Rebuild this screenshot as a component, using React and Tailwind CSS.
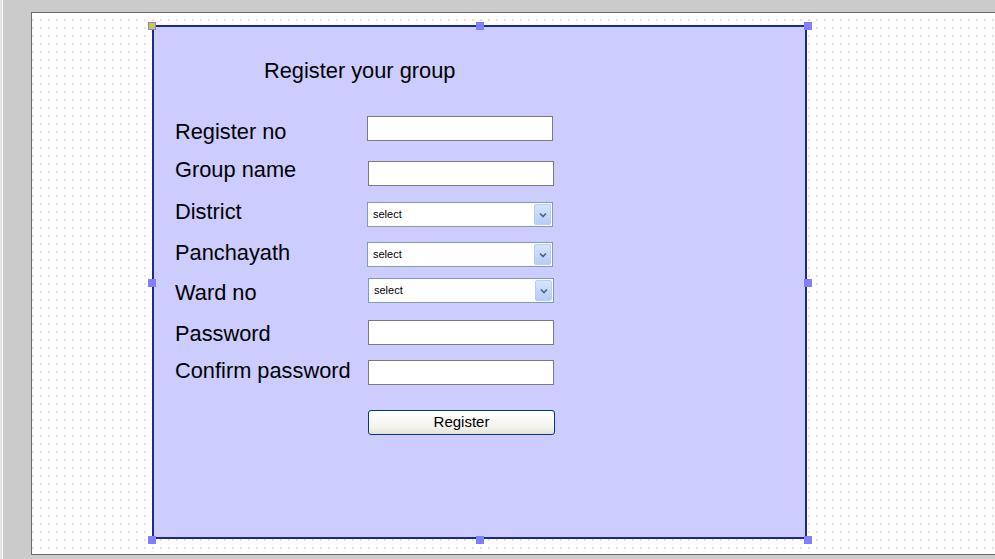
import React from 'react';

const ROWS = [
  { label: 'Register no', kind: 'input', mt: 'mt-0', dy: 'translate-y-[3px]', dx: 'ml-0' },
  { label: 'Group name', kind: 'input', mt: 'mt-[20px]', dy: '-translate-y-[4px]', dx: 'ml-px' },
  { label: 'District', kind: 'select', mt: 'mt-[16px]', dy: '-translate-y-[3px]', dx: 'ml-0' },
  { label: 'Panchayath', kind: 'select', mt: 'mt-[15px]', dy: '-translate-y-[2px]', dx: 'ml-0' },
  { label: 'Ward no', kind: 'select', mt: 'mt-[11px]', dy: 'translate-y-[2px]', dx: 'ml-px' },
  { label: 'Password', kind: 'input', mt: 'mt-[17px]', dy: 'translate-y-[1px]', dx: 'ml-px' },
  { label: 'Confirm password', kind: 'input', mt: 'mt-[15px]', dy: '-translate-y-[2px]', dx: 'ml-px' },
];

function Select() {
  return (
    <div className="flex h-[25px] w-[186px] items-center border border-[#7f9db9] bg-white pl-[5px] pr-px">
      <span className="flex-1 text-[11px] text-black">select</span>
      <div className="flex h-[21px] w-[17px] items-center justify-center rounded-[2px] border border-[#b9cdf5] bg-[linear-gradient(#d6e3fd,#b7cdf8)]">
        <svg width="8" height="6" viewBox="0 0 8 6">
          <path d="M1 1.5 L4 4.5 L7 1.5" fill="none" stroke="#4d6185" strokeWidth="1.6" />
        </svg>
      </div>
    </div>
  );
}

function Handle({ pos, first }) {
  return (
    <div
      className={`absolute h-[8px] w-[8px] ${pos} ${
        first ? 'border border-[#8080ff] bg-[#cccc33]' : 'bg-[#8080ff]'
      }`}
    />
  );
}

export default function App() {
  return (
    <div className="relative flex h-[559px] w-[995px] overflow-hidden bg-[#cbcbcb] font-['Liberation_Sans',Arial,sans-serif]">
      <div className="w-[2px] bg-[#e4e4e4]" />
      <div className="w-px bg-white" />
      <div className="w-[28px]" />

      {/* design canvas */}
      <div className="mt-[12px] h-[543px] flex-1 border-b border-l border-t border-[#6b6b6b] bg-white bg-[radial-gradient(ellipse_0.7px_1.1px,#e2e2e2_90%,transparent_100%)] bg-[length:8px_8px] bg-[position:5px_3px]">
        <div className="relative ml-[120px] mt-[12px] h-[514px] w-[655px] border-2 border-[#1a2a8c] bg-[#ccccff]">
          <Handle pos="-left-[6px] -top-[5px]" first />
          <Handle pos="left-[322px] -top-[5px]" />
          <Handle pos="left-[650px] -top-[5px]" />
          <Handle pos="-left-[6px] top-[252px]" />
          <Handle pos="left-[650px] top-[252px]" />
          <Handle pos="-left-[6px] top-[509px]" />
          <Handle pos="left-[322px] top-[509px]" />
          <Handle pos="left-[650px] top-[509px]" />

          <h1 className="pl-[110px] pt-[32px] text-[21.8px] leading-[24px] text-black">Register your group</h1>

          <div className="mt-[33px] flex flex-col pl-[21px]">
            {ROWS.map((r) => (
              <div key={r.label} className={`flex h-[25px] items-center ${r.mt}`}>
                <span className={`w-[192px] whitespace-nowrap text-[21.8px] leading-[24px] text-black ${r.dy}`}>
                  {r.label}
                </span>
                <div className={r.dx}>
                  {r.kind === 'select' ? (
                    <Select />
                  ) : (
                    <div className="h-[25px] w-[186px] border border-[#7a7a7a] bg-white" />
                  )}
                </div>
              </div>
            ))}
            <div className="ml-[193px] mt-[25px]">
              <button
                type="button"
                className="flex h-[25px] w-[187px] items-center justify-center rounded-[3px] border border-[#003c74] bg-[linear-gradient(#ffffff,#f4f3ee_70%,#e3e1d6)] text-[15px] text-black"
              >
                Register
              </button>
            </div>
          </div>
        </div>
      </div>
    </div>
  );
}
